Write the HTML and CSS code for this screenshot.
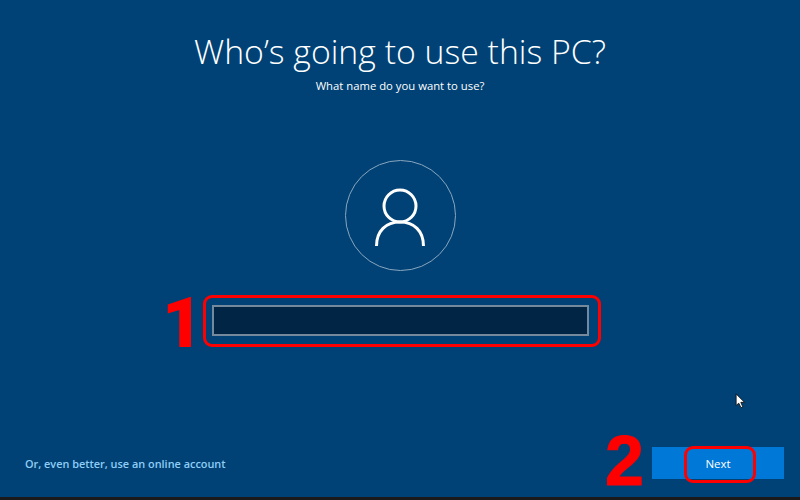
FILE: index.html
```html
<!DOCTYPE html>
<html lang="en">
<head>
    <meta charset="UTF-8">
    <title>Who's going to use this PC?</title>
    <link rel="stylesheet" href="styles.css">
</head>
<body>
<div class="screen">
    <div class="main">
        <h1 class="title">Who’s going to use this PC?</h1>
        <p class="subtitle">What name do you want to use?</p>

        <div class="avatar">
            <svg class="avatar-icon" width="52" height="58" viewBox="0 0 52 58">
                <circle cx="26" cy="18" r="16" fill="none" stroke="#fff" stroke-width="3"/>
                <path d="M2.5 58 C2.5 43 12 34 26 34 C40 34 49.5 43 49.5 58" fill="none" stroke="#fff" stroke-width="3"/>
            </svg>
        </div>

        <div class="field">
            <input class="name-input" type="text">
            <span class="mark mark-one">1</span>
            <span class="ring ring-field"></span>
        </div>
    </div>

    <div class="footer">
        <a class="online-link" href="javascript:">Or, even better, use an online account</a>
        <div class="next-wrap">
            <button class="next-btn">Next</button>
            <span class="mark mark-two">2</span>
            <span class="ring ring-next"></span>
        </div>
    </div>

    <svg class="cursor" width="12" height="16" viewBox="0 0 13 18">
        <path d="M1 1 L1 14 L4 11.5 L6.5 16.5 L8.5 15.5 L6.3 10.5 L10.5 10.5 Z" fill="#fff" stroke="#111" stroke-width="1"/>
    </svg>
</div>
</body>
</html>
```

FILE: styles.css
```css
*{
    padding:0;
    margin:0;
    box-sizing:border-box;
    text-decoration:none;
}

body{
    width:800px;
    height:500px;
    overflow:hidden;
    background-color:#1a1a1a;
    font-family:"Open Sans","Noto Sans",sans-serif;
}

.screen{
    position:relative;
    display:flex;
    flex-direction:column;
    justify-content:space-between;
    height:497px;
    background-color:#004275;
    color:#fff;
}

.main{
    display:flex;
    flex-direction:column;
    align-items:center;
    padding-top:26px;
}

.title{
    font-size:33.8px;
    font-weight:300;
    line-height:50px;
}

.subtitle{
    font-size:11.3px;
    line-height:16px;
    margin-top:2px;
}

.avatar{
    display:flex;
    align-items:center;
    justify-content:center;
    width:111px;
    height:111px;
    margin-top:66px;
    padding-top:3px;
    border:1px solid #8aa6bf;
    border-radius:50%;
}

.field{
    position:relative;
    margin-top:34px;
    padding-left:1px;
}

.name-input{
    display:block;
    width:377px;
    height:31px;
    background-color:#002545;
    border:2px solid #74899c;
    outline:none;
}

.footer{
    display:flex;
    align-items:center;
    justify-content:space-between;
    padding:0 16px 18px 25px;
}

.online-link{
    font-size:10.9px;
    font-weight:600;
    color:#8fcdf5;
}

.next-wrap{
    position:relative;
}

.next-btn{
    display:block;
    width:132px;
    height:32px;
    background-color:#0078d7;
    border:none;
    color:#fff;
    font-family:inherit;
    font-size:11.5px;
    font-weight:400;
}

/* red annotations drawn over the screenshot */
.ring{
    position:absolute;
    border:3px solid #f00;
    border-radius:9px;
}

.ring-field{
    left:-8px;
    top:-10px;
    width:398px;
    height:52px;
}

.ring-next{
    left:32px;
    top:-1px;
    width:72px;
    height:37px;
}

.mark{
    position:absolute;
    font-size:70px;
    font-weight:bold;
    line-height:52px;
    color:#f00;
}

.mark-one{
    left:-49px;
    top:-8px;
    font-family:Roboto,sans-serif;
    font-size:71px;
    font-weight:900;
}

.mark-two{
    left:-47px;
    top:-12px;
    font-family:"Liberation Sans",Arial,sans-serif;
    -webkit-text-stroke:1px #f00;
}

.cursor{
    position:absolute;
    left:735px;
    top:393px;
}
```
